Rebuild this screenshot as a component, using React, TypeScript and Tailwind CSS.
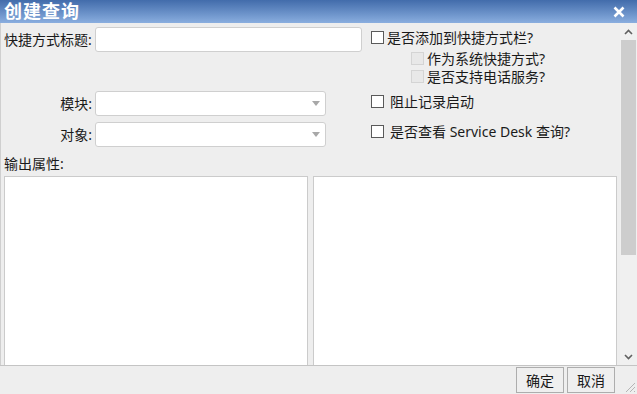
import React from "react";

const font = { fontFamily: '"Noto Sans", "Noto Sans CJK SC", sans-serif' };

function Box({ disabled }: { disabled?: boolean }) {
  return (
    <span
      className={
        disabled
          ? "inline-block h-[13px] w-[13px] shrink-0 border border-[#d4d4d4] bg-[#e8e8e8]"
          : "inline-block h-[13px] w-[13px] shrink-0 border border-[#5a5a5a] bg-white"
      }
    />
  );
}

function Select() {
  return (
    <div className="flex h-[25px] w-[231px] items-center justify-end rounded-[3px] border border-[#cfcfcf] bg-white pr-[5px]">
      <svg width="8" height="5" viewBox="0 0 8 5">
        <path d="M0 0h8L4 5z" fill="#a8a8a8" />
      </svg>
    </div>
  );
}

export default function App() {
  return (
    <div className="flex h-[394px] w-[637px] flex-col overflow-hidden bg-[#eeeeee] text-[14px] text-[#1a1a1a]" style={font}>
      {/* title bar */}
      <div className="flex h-[23px] items-center justify-between bg-gradient-to-b from-[#426cab] to-[#8aaedf] pl-[4px] pr-[12px]">
        <span className="text-[18px] font-bold leading-[23px] tracking-[1px] text-white">创建查询</span>
        <svg width="12" height="12" viewBox="0 0 12 12">
          <path d="M1.5 1.5l9 9M10.5 1.5l-9 9" stroke="white" strokeWidth="2.6" />
        </svg>
      </div>

      <div className="flex min-h-0 flex-1">
        <div className="flex min-w-0 flex-1 flex-col border-l border-[#cfcfcf]">
          <div className="flex">
            {/* left form */}
            <div className="flex w-[366px] flex-col pt-[4px]">
              <div className="flex items-center">
                <span className="w-[94px] pl-[3px]">快捷方式标题:</span>
                <div className="h-[25px] w-[267px] rounded-[3px] border border-[#cfcfcf] bg-white" />
              </div>
              <div className="mt-[39px] flex items-center">
                <span className="w-[94px] pr-[3px] text-right">模块:</span>
                <Select />
              </div>
              <div className="mt-[6px] flex items-center">
                <span className="w-[94px] pr-[3px] text-right">对象:</span>
                <Select />
              </div>
            </div>
            {/* right checkboxes */}
            <div className="flex flex-col pt-[5px]">
              <div className="flex h-[18px] items-center gap-[3px] pl-[4px]">
                <Box />
                <span>是否添加到快捷方式栏?</span>
              </div>
              <div className="mt-[3px] flex h-[18px] items-center gap-[3px] pl-[44px]">
                <Box disabled />
                <span>作为系统快捷方式?</span>
              </div>
              <div className="flex h-[18px] items-center gap-[3px] pl-[44px]">
                <Box disabled />
                <span>是否支持电话服务?</span>
              </div>
              <div className="mt-[7px] flex h-[18px] items-center gap-[6px] pl-[4px]">
                <Box />
                <span>阻止记录启动</span>
              </div>
              <div className="mt-[12px] flex h-[18px] items-center gap-[6px] pl-[4px]">
                <Box />
                <span>是否查看 Service Desk 查询?</span>
              </div>
            </div>
          </div>

          <div className="mt-[8px] pl-[3px] leading-[18px]">输出属性:</div>
          <div className="mt-[3px] flex min-h-0 flex-1 gap-[5px] pl-[3px] pr-[3px]">
            <div className="w-[304px] border border-b-0 border-[#cbcbcb] bg-white" />
            <div className="flex-1 border border-b-0 border-[#cbcbcb] bg-white" />
          </div>
        </div>

        {/* scrollbar */}
        <div className="flex w-[17px] flex-col items-center bg-[#f0f0f0]">
          <div className="flex h-[17px] w-full items-center justify-center">
            <svg width="9" height="6" viewBox="0 0 9 6">
              <path d="M1 5l3.5-3.5L8 5" stroke="#606060" strokeWidth="1.6" fill="none" />
            </svg>
          </div>
          <div className="h-[215px] w-[15px] bg-[#cdcdcd]" />
          <div className="flex-1" />
          <div className="flex h-[17px] w-full items-center justify-center">
            <svg width="9" height="6" viewBox="0 0 9 6">
              <path d="M1 1l3.5 3.5L8 1" stroke="#606060" strokeWidth="1.6" fill="none" />
            </svg>
          </div>
        </div>
      </div>

      {/* footer */}
      <div className="relative flex h-[29px] items-center justify-end gap-[3px] border-t border-[#c4c4c4] pr-[22px]">
        <button className="h-[26px] w-[48px] border border-[#adadad] bg-[#efefef] text-[14px]">确定</button>
        <button className="h-[26px] w-[48px] border border-[#adadad] bg-[#efefef] text-[14px]">取消</button>
        <svg className="absolute bottom-[1px] right-[1px]" width="12" height="12" viewBox="0 0 12 12">
          <path d="M11 2L2 11M11 6L6 11M11 10L10 11" stroke="#b5b5b5" strokeWidth="1" />
        </svg>
      </div>
    </div>
  );
}
